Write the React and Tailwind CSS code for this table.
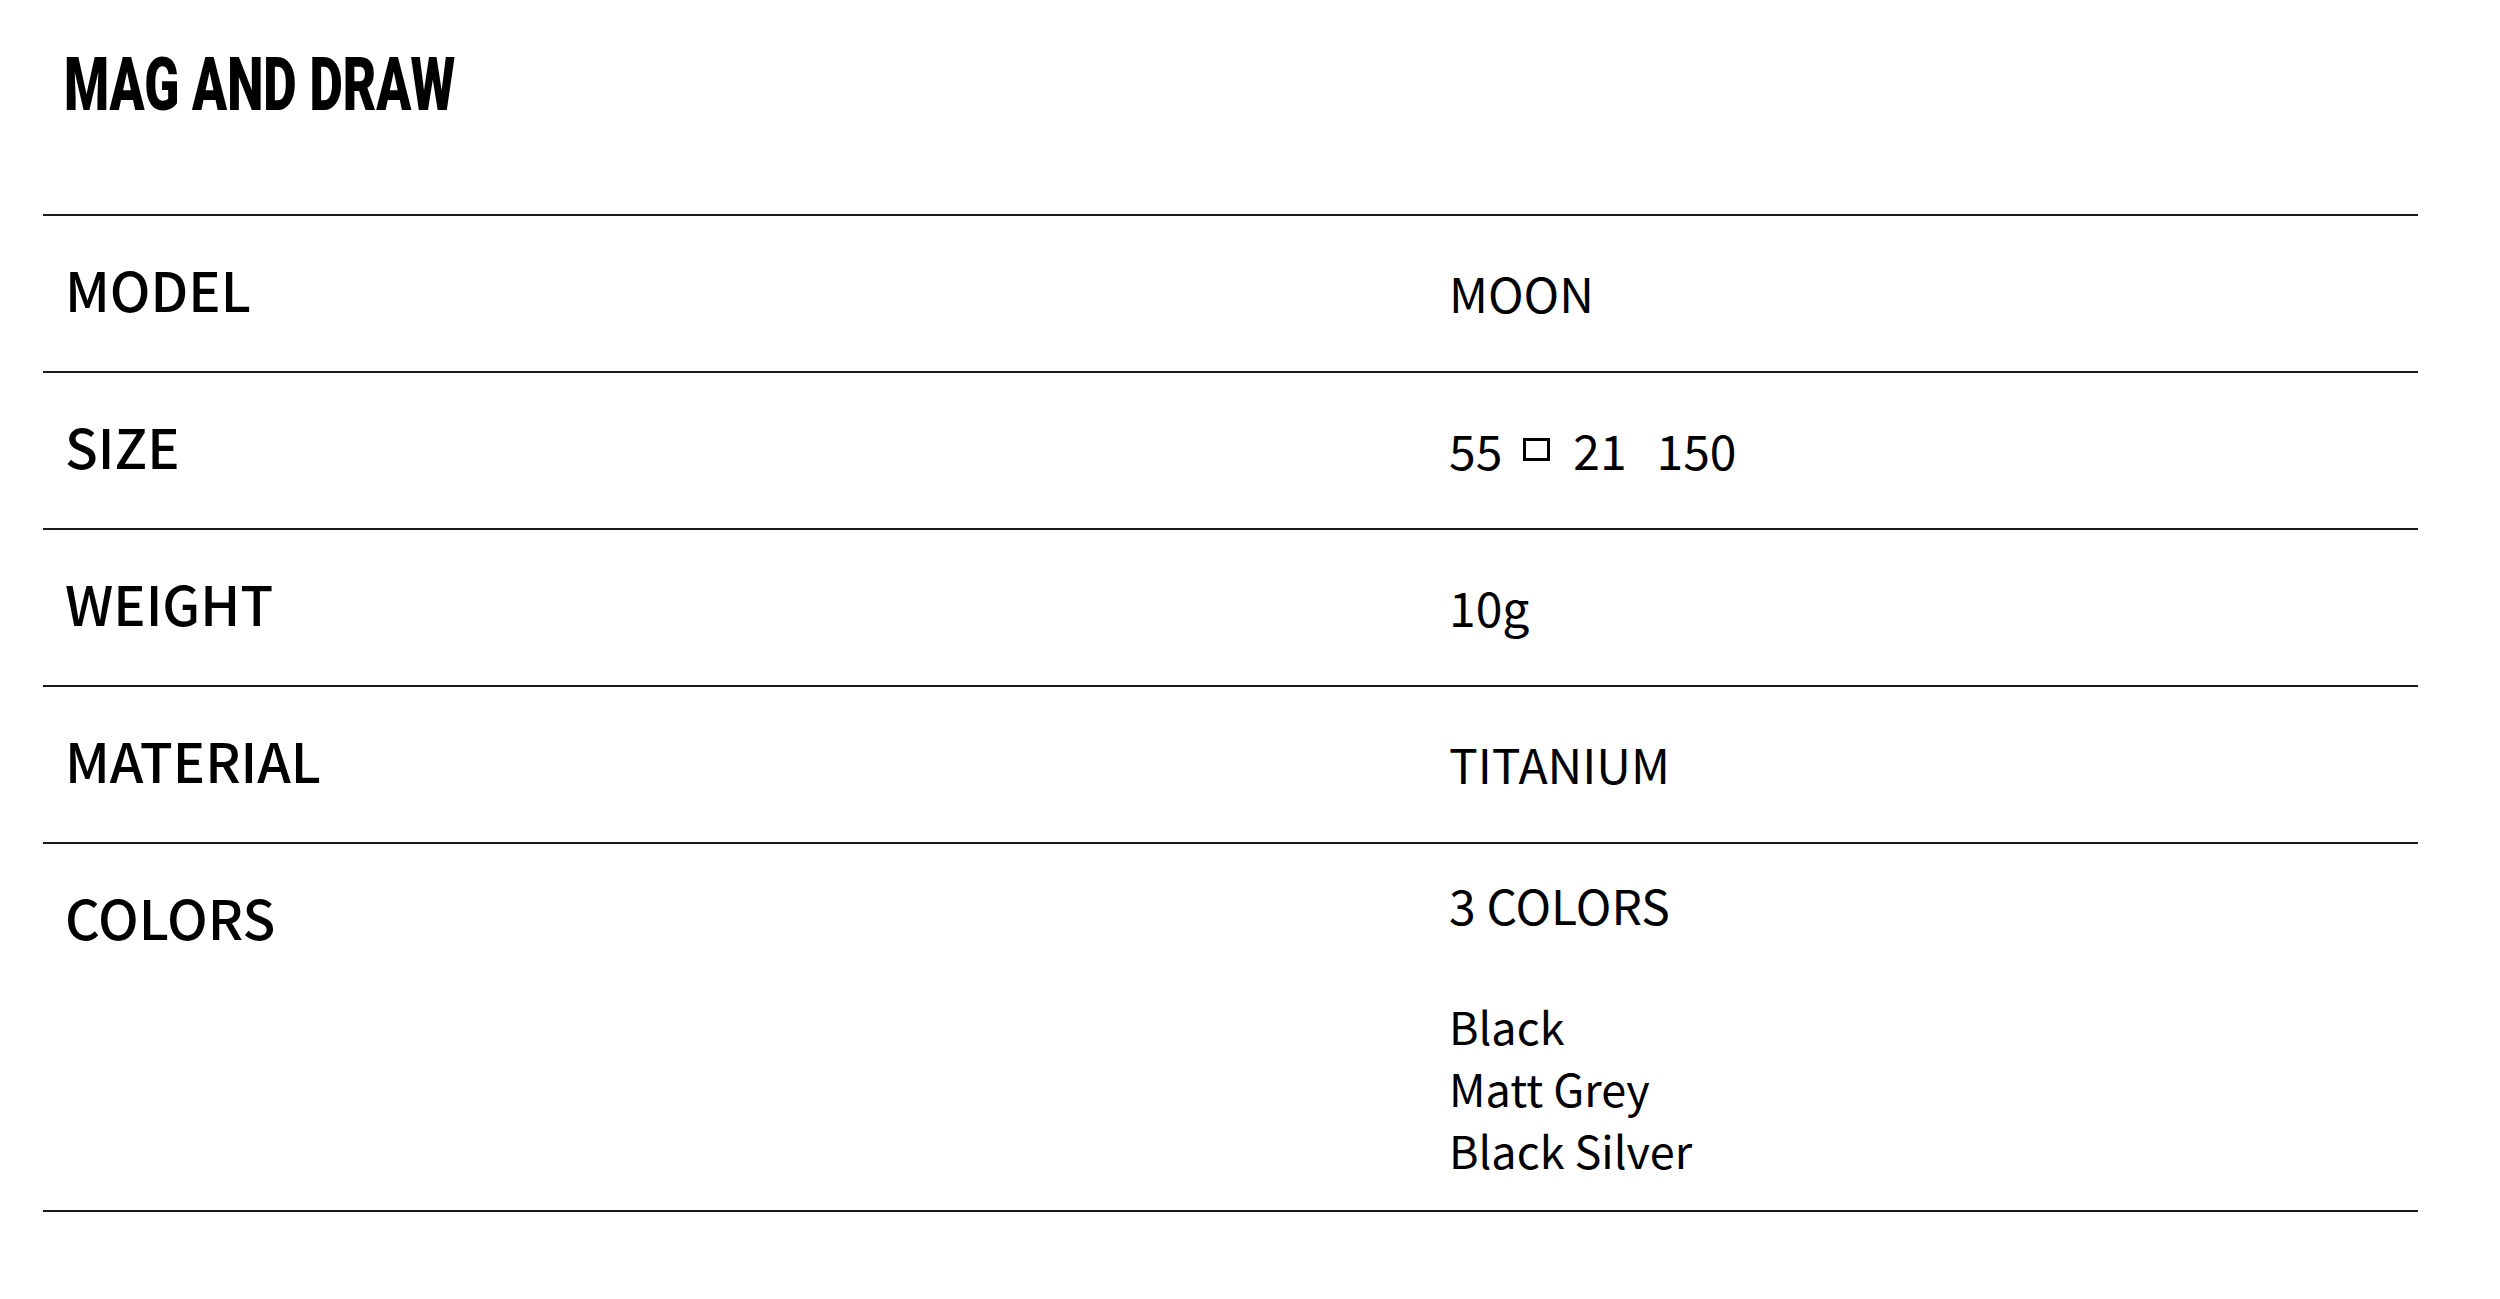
const specs = [
  { label: 'MODEL', value: 'MOON' },
  { label: 'SIZE', value: 'size' },
  { label: 'WEIGHT', value: '10g' },
  { label: 'MATERIAL', value: 'TITANIUM' },
]

const colors = ['Black', 'Matt Grey', 'Black Silver']

function SizeValue() {
  return (
    <span className="inline-flex items-center">
      <span>55</span>
      <span className="mr-[23px] ml-[21px] inline-block h-[23px] w-[27px] border-[3px] border-black" />
      <span>21</span>
      <span className="ml-[30px]">150</span>
    </span>
  )
}

export default function App() {
  return (
    <div
      className="min-h-screen w-[2500px] bg-white text-black"
      style={{ fontFamily: '"Noto Sans CJK JP", "Noto Sans", sans-serif' }}
    >
      {/* Brand title */}
      <div className="h-[214px] pl-[64px] pt-[56px]">
        <h1
          className="inline-block origin-top-left scale-y-[1.45] text-[51.5px] leading-[40px] font-black"
          style={{ fontFamily: 'Roboto, sans-serif' }}
        >
          MAG AND DRAW
        </h1>
      </div>

      {/* Spec table */}
      <div className="ml-[43px] w-[2375px] border-b-2 border-[#1a1a1a]">
        {specs.map((spec) => (
          <div
            key={spec.label}
            className="grid h-[157px] grid-cols-[1406px_1fr] border-t-2 border-[#1a1a1a]"
          >
            <div className="pl-[22px] pt-[35px] text-[54px] leading-[76px] font-medium">
              {spec.label}
            </div>
            <div className="flex items-center pb-[2px] text-[48px] leading-[63px]">
              {spec.value === 'size' ? <SizeValue /> : spec.value}
            </div>
          </div>
        ))}
        <div className="grid h-[368px] grid-cols-[1406px_1fr] border-t-2 border-[#1a1a1a]">
          <div className="pl-[22px] pt-[35px] text-[54px] leading-[76px] font-medium">
            COLORS
          </div>
          <div className="pt-[29px]">
            <div className="text-[48px] leading-[63px]">3 COLORS</div>
            <div className="mt-[59px] text-[45px] leading-[62px]">
              {colors.map((c) => (
                <div key={c}>{c}</div>
              ))}
            </div>
          </div>
        </div>
      </div>
    </div>
  )
}
